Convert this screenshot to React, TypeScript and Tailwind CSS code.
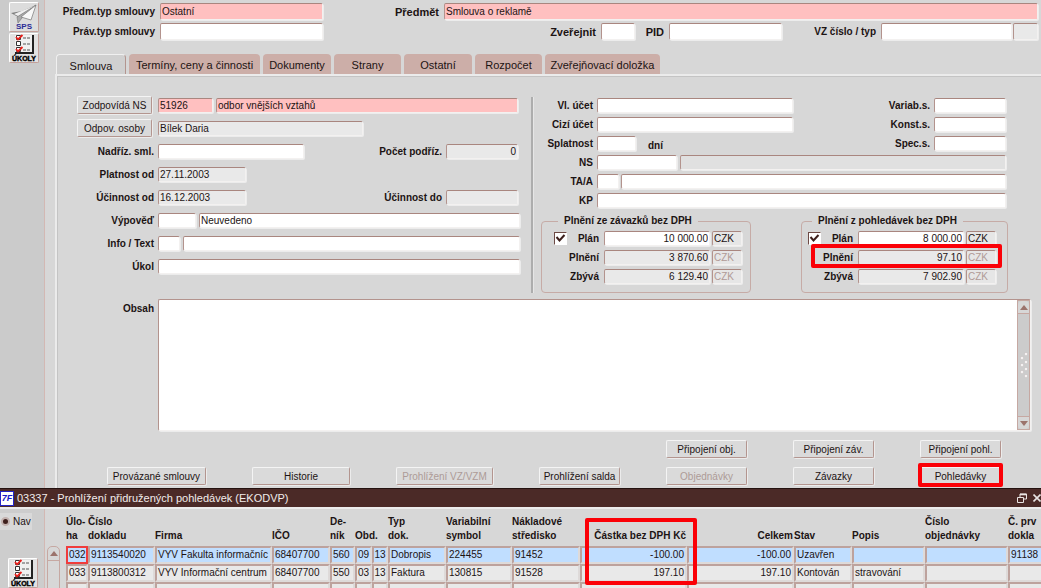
import { useState } from "react"
import type { ComponentProps, FC, ReactNode } from "react"
import clsx from "clsx"

const TABS = [
  { name: "Smlouva", width: "w-[70px]" },
  { name: "Termíny, ceny a činnosti", width: "w-[131px]" },
  { name: "Dokumenty", width: "w-[68px]" },
  { name: "Strany", width: "w-[67px]" },
  { name: "Ostatní", width: "w-[68px]" },
  { name: "Rozpočet", width: "w-[67px]" },
  { name: "Zveřejňovací doložka", width: "w-[115px]" },
]

type Column = { title: ReactNode; width: string; span?: number; right?: boolean; marked?: boolean }

const COLUMNS: Column[] = [
  { title: <>Úlo-<br />ha</>, width: "w-[22px]" },
  { title: <>Číslo<br />dokladu</>, width: "w-[67px]" },
  { title: "Firma", width: "w-[117px]" },
  { title: "IČO", width: "w-[58px]" },
  { title: <>De-<br />ník</>, width: "w-[25px]" },
  { title: "Obd.", width: "w-[33px]", span: 2 },
  { title: <>Typ<br />dok.</>, width: "w-[58px]" },
  { title: <>Variabilní<br />symbol</>, width: "w-[66px]" },
  { title: <>Nákladové<br />středisko</>, width: "w-[68px]" },
  { title: "Částka bez DPH Kč", width: "w-[107px]", right: true, marked: true },
  { title: "Celkem", width: "w-[107px]", right: true },
  { title: "Stav", width: "w-[58px]" },
  { title: "Popis", width: "w-[73px]" },
  { title: <>Číslo<br />objednávky</>, width: "w-[83px]" },
  { title: <>Č. prv<br />dokla</>, width: "w-[80px]" },
]

const ROWS = [
  ["032", "9113540020", "VYV Fakulta informačníc", "68407700", "560", "09", "13", "Dobropis", "224455", "91452", "-100.00", "-100.00", "Uzavřen", "", "", "91138"],
  ["033", "9113800312", "VYV Informační centrum", "68407700", "550", "03", "13", "Faktura", "130815", "91528", "197.10", "197.10", "Kontován", "stravování", "", ""],
  ["", "", "", "", "", "", "", "", "", "", "", "", "", "", "", ""],
]

const Field: FC<ComponentProps<"input">> = ({ className, ...props }) => (
  <input
    type="text"
    className={clsx(
      "min-w-0 rounded-[2px] border border-t-[#a9867f] border-r-[#f3f1f0] border-b-[#f3f1f0] border-l-[#b3938d] px-px shadow-[1px_1px_0_#ececec] outline-none",
      className
    )}
    {...props}
  />
)

const Label: FC<ComponentProps<"label">> = ({ className, ...props }) => (
  <label className={clsx("shrink-0 pt-px text-right font-bold whitespace-nowrap", className)} {...props} />
)

const Button: FC<ComponentProps<"button">> = ({ className, ...props }) => (
  <button
    type="button"
    className={clsx(
      "h-[18px] shrink-0 rounded-[2px] border border-t-[#f4f4f4] border-r-[#b3958f] border-b-[#b3958f] border-l-[#f4f4f4] bg-[#dadada] pt-0.5 whitespace-nowrap shadow-[1px_1px_0_#ececec] disabled:text-[#ad9a97]",
      className
    )}
    {...props}
  />
)

const TasksButton = () => (
  <button
    type="button"
    aria-label="Úkoly"
    className="flex h-[30px] w-[30px] items-center justify-center rounded-[2px] border border-t-white border-r-[#c3a09a] border-b-[#c3a09a] border-l-white bg-[#e2e2e2]"
  >
    <svg viewBox="0 0 28 28" className="size-7">
      <rect x="5" y="1" width="17" height="18" fill="#f0f0f0" />
      <path d="M22 1h2v19h-2zM5 18h19v2H5z" fill="#222" />
      <path d="M6.500 1.500h4v4h-4zM6.500 7.500h4v4h-4zM6.500 13.500h4v4h-4z" fill="#fff" stroke="#333" />
      <path d="M13 4h7M13 10h7M13 16h7" stroke="#555" strokeDasharray="3 1" />
      <path d="M6 3l2 2.500L12.500 1M6 15l2 2.500L12.500 13" fill="none" stroke="#e8201c" strokeWidth="1.800" />
      <text x="14" y="27" textAnchor="middle" fontSize="7" fontWeight="bold" stroke="#000" strokeWidth="0.400">
        ÚKOLY
      </text>
    </svg>
  </button>
)

const SpsButton = () => (
  <button
    type="button"
    aria-label="SPS"
    className="flex h-[30px] w-[30px] items-center justify-center rounded-[2px] border border-t-white border-r-[#c3a09a] border-b-[#c3a09a] border-l-white bg-[#dcdcdc]"
  >
    <svg viewBox="0 0 28 28" className="size-7">
      <path d="M26 2L12 8 1 10l7 4z" fill="#7d7d7d" />
      <path d="M26 2L7 14l1 6 4-5z" fill="#a9a9a9" stroke="#777" strokeWidth="0.600" />
      <path d="M26 2L11 14l10 3z" fill="#f8f8f8" stroke="#777" strokeWidth="0.700" />
      <path d="M24 3L4 11l4 2z" fill="#efefef" />
      <text x="14" y="26" textAnchor="middle" fontSize="8" fontWeight="bold" fill="#2b2b96">
        SPS
      </text>
    </svg>
  </button>
)

type TotalsProps = {
  id: string
  title: string
  amounts: [string, string, string]
  padding: string
  marked?: boolean
}

const Totals: FC<TotalsProps> = ({ id, title, amounts, padding, marked }) => (
  <fieldset className={clsx("rounded-[4px] border border-[#c6aba6] pt-1 pb-2", padding)}>
    <legend className="ml-1 px-1.5 font-bold">{title}</legend>
    <div className="flex flex-col gap-1">
      {["Plán", "Plnění", "Zbývá"].map((name, i) => (
        <div key={name} className="relative flex h-[15px] items-center justify-end">
          {i === 0 && (
            <span className="relative flex">
              <input
                type="checkbox"
                defaultChecked
                aria-label={title}
                className="size-[13px] appearance-none border border-t-[#6d4a45] border-r-white border-b-white border-l-[#6d4a45] bg-white"
              />
              <svg viewBox="0 0 13 13" className="pointer-events-none absolute inset-0 size-[13px]">
                <path d="M2.500 5l3 3.500 5-5.500" fill="none" stroke="#3d1f1c" strokeWidth="2" />
              </svg>
            </span>
          )}
          <Label htmlFor={id + i} className="w-8">{name}</Label>
          <Field
            id={id + i}
            readOnly={i > 0}
            defaultValue={amounts[i]}
            className={clsx("ml-[5px] h-[15px] w-[106px] text-right", i > 0 ? "bg-[#e9e9e9]" : "bg-white")}
          />
          <Field
            aria-label={name + " měna"}
            readOnly
            defaultValue="CZK"
            className={clsx("ml-0.5 h-[15px] w-[30px] bg-[#e6e6e6]", i > 0 && "text-[#b09a96]")}
          />
          {marked && i === 1 && (
            <div className="pointer-events-none absolute -top-1.5 -right-1.5 z-10 h-6 w-[191px] rounded-[2px] border-4 border-[#fb0007]" />
          )}
        </div>
      ))}
    </div>
  </fieldset>
)

const ContractHeader = () => (
  <div className="flex flex-col gap-[3px] pt-[3px] pr-[3px]">
    <div className="flex items-center gap-[5px]">
      <Label htmlFor="typ" className="w-[110px]">Předm.typ smlouvy</Label>
      <Field id="typ" defaultValue="Ostatní" className="h-[17px] w-[163px] bg-[#ffc0c0]" />
      <Label htmlFor="predmet" className="w-[111px] text-[11px]">Předmět</Label>
      <Field id="predmet" defaultValue="Smlouva o reklamě" className="h-[17px] flex-1 bg-[#ffc0c0]" />
    </div>
    <div className="flex items-center gap-[5px]">
      <Label htmlFor="pravtyp" className="w-[110px]">Práv.typ smlouvy</Label>
      <Field id="pravtyp" className="h-[17px] w-[163px] bg-white" />
      <Label htmlFor="zverejnit" className="flex-1 text-[11px]">Zveřejnit</Label>
      <Field id="zverejnit" className="h-[17px] w-[34px] bg-white" />
      <Label htmlFor="pid" className="w-6 text-[11px]">PID</Label>
      <Field id="pid" className="h-[17px] w-[113px] bg-white" />
      <Label htmlFor="vz" className="w-[89px]">VZ číslo / typ</Label>
      <div className="flex gap-px">
        <Field id="vz" className="h-[17px] w-[131px] bg-white" />
        <Field aria-label="VZ typ" readOnly className="h-[17px] w-[25px] bg-[#e9e9e9]" />
      </div>
    </div>
  </div>
)

const LeftForm = () => (
  <div className="flex w-[462px] shrink-0 flex-col gap-[5px] pl-[19px] *:flex *:h-[18px] *:items-center">
    <div>
      <Button className="mr-1.5 w-[75px]">Zodpovídá NS</Button>
      <Field aria-label="Zodpovídá NS" defaultValue="51926" className="h-[15px] w-[55px] bg-[#ffc0c0]" />
      <Field aria-label="Odbor" defaultValue="odbor vnějších vztahů" className="mr-0.5 ml-[3px] h-[15px] flex-1 bg-[#ffc0c0]" />
    </div>
    <div>
      <Button className="mr-1.5 w-[75px]">Odpov. osoby</Button>
      <Field aria-label="Odpov. osoby" readOnly defaultValue="Bílek Daria" className="h-[15px] w-[205px] bg-[#e9e9e9]" />
    </div>
    <div>
      <Label htmlFor="nadriz" className="mr-1 w-[77px]">Nadříz. sml.</Label>
      <Field id="nadriz" className="h-[15px] w-[146px] bg-white" />
      <Label htmlFor="pocet" className="mr-1 flex-1">Počet podříz.</Label>
      <Field id="pocet" readOnly defaultValue="0" className="mr-0.5 h-[15px] w-[72px] bg-[#e9e9e9] text-right" />
    </div>
    <div>
      <Label htmlFor="platnost" className="mr-1 w-[77px]">Platnost od</Label>
      <Field id="platnost" readOnly defaultValue="27.11.2003" className="h-[15px] w-[88px] bg-[#e9e9e9]" />
    </div>
    <div>
      <Label htmlFor="ucinnostod" className="mr-1 w-[77px]">Účinnost od</Label>
      <Field id="ucinnostod" readOnly defaultValue="16.12.2003" className="h-[15px] w-[88px] bg-[#e9e9e9]" />
      <Label htmlFor="ucinnostdo" className="mr-1 flex-1">Účinnost do</Label>
      <Field id="ucinnostdo" readOnly className="mr-0.5 h-[15px] w-[72px] bg-[#e9e9e9]" />
    </div>
    <div>
      <Label htmlFor="vypoved" className="mr-1 w-[77px]">Výpověď</Label>
      <Field id="vypoved" className="h-[15px] w-[38px] bg-white" />
      <Field aria-label="Výpověď text" defaultValue="Neuvedeno" className="ml-[3px] h-[15px] flex-1 bg-white" />
    </div>
    <div>
      <Label htmlFor="info" className="mr-1 w-[77px]">Info / Text</Label>
      <Field id="info" className="h-[15px] w-[22px] bg-white" />
      <Field aria-label="Text" className="ml-[3px] h-[15px] flex-1 bg-white" />
    </div>
    <div>
      <Label htmlFor="ukol" className="mr-1 w-[77px]">Úkol</Label>
      <Field id="ukol" className="h-[15px] flex-1 bg-white" />
    </div>
  </div>
)

const RightForm = () => (
  <div className="flex flex-1 flex-col pt-0.5">
    <div className="flex flex-col gap-1 pr-0.5 *:flex *:h-[15px] *:items-center">
      <div>
        <Label htmlFor="vlucet" className="mr-1 w-[52px]">Vl. účet</Label>
        <Field id="vlucet" className="h-[15px] w-[196px] bg-white" />
        <Label htmlFor="variab" className="mr-1 flex-1">Variab.s.</Label>
        <Field id="variab" className="h-[15px] w-[72px] bg-white" />
      </div>
      <div>
        <Label htmlFor="ciziucet" className="mr-1 w-[52px]">Cizí účet</Label>
        <Field id="ciziucet" className="h-[15px] w-[196px] bg-white" />
        <Label htmlFor="konst" className="mr-1 flex-1">Konst.s.</Label>
        <Field id="konst" className="h-[15px] w-[72px] bg-white" />
      </div>
      <div>
        <Label htmlFor="splatnost" className="mr-1 w-[52px]">Splatnost</Label>
        <Field id="splatnost" className="h-[15px] w-[39px] bg-white" />
        <span className="ml-3 pt-1 font-bold">dní</span>
        <Label htmlFor="spec" className="mr-1 flex-1">Spec.s.</Label>
        <Field id="spec" className="h-[15px] w-[72px] bg-white" />
      </div>
      <div>
        <Label htmlFor="ns" className="mr-1 w-[52px]">NS</Label>
        <Field id="ns" className="h-[15px] w-20 bg-white" />
        <Field aria-label="NS název" readOnly className="ml-[3px] h-[15px] flex-1 bg-[#e0e0e0]" />
      </div>
      <div>
        <Label htmlFor="ta" className="mr-1 w-[52px]">TA/A</Label>
        <Field id="ta" className="h-[15px] w-[22px] bg-white" />
        <Field aria-label="TA/A název" className="ml-0.5 h-[15px] flex-1 bg-white" />
      </div>
      <div>
        <Label htmlFor="kp" className="mr-1 w-[52px]">KP</Label>
        <Field id="kp" className="h-[15px] flex-1 bg-white" />
      </div>
    </div>
    <div className="mt-[7px] flex justify-between">
      <Totals
        id="zavazky"
        title="Plnění ze závazků bez DPH"
        amounts={["10 000.00", "3 870.60", "6 129.40"]}
        padding="pr-2 pl-3"
      />
      <Totals
        id="pohledavky"
        title="Plnění z pohledávek bez DPH"
        amounts={["8 000.00", "97.10", "7 902.90"]}
        padding="pr-[11px] pl-1.5"
        marked
      />
    </div>
  </div>
)

const ContentBox = () => (
  <div className="mt-1.5 flex pr-2.5 pl-[19px]">
    <Label htmlFor="obsah" className="mt-[3px] mr-1 w-[77px]">Obsah</Label>
    <div className="flex h-[132px] flex-1 rounded-[2px] border border-t-[#b3938d] border-r-[#f3f1f0] border-b-[#f3f1f0] border-l-[#b3938d] bg-white shadow-[1px_1px_0_#ececec]">
      <textarea id="obsah" className="flex-1 resize-none px-px outline-none" />
      <div className="flex w-[13px] flex-col border border-[#c6a8a2] bg-[#cccccc]">
        <button type="button" aria-label="Nahoru" className="flex h-[13px] items-center justify-center rounded-t-[4px] border-b border-[#c6a8a2] bg-[#d7d7d7]">
          <svg viewBox="0 0 8 5" className="h-[5px] w-2"><path d="M4 0l4 5H0z" fill="#9b736c" /></svg>
        </button>
        <div className="flex flex-1 items-center justify-center">
          <svg viewBox="0 0 8 26" className="h-[26px] w-2">
            {[[6, 2], [2, 6], [6, 10], [2, 13], [6, 17], [2, 20], [6, 24]].map(([x, y]) => (
              <circle key={y} cx={x} cy={y} r="1.500" fill="#fafafa" stroke="#b9a8a5" strokeWidth="0.300" />
            ))}
          </svg>
        </div>
        <button type="button" aria-label="Dolů" className="flex h-[13px] items-center justify-center rounded-b-[4px] border-t border-[#c6a8a2] bg-[#d7d7d7]">
          <svg viewBox="0 0 8 5" className="h-[5px] w-2"><path d="M4 5l4-5H0z" fill="#9b736c" /></svg>
        </button>
      </div>
    </div>
  </div>
)

const Actions = () => (
  <div className="mt-[9px] flex flex-col gap-[9px] pr-10 pb-[3px]">
    <div className="flex justify-end gap-[46px]">
      <Button className="w-[81px]">Připojení obj.</Button>
      <Button className="w-[81px]">Připojení záv.</Button>
      <Button className="w-[81px]">Připojení pohl.</Button>
    </div>
    <div className="flex justify-end gap-[46px]">
      <Button className="w-[99px]">Provázané smlouvy</Button>
      <Button className="w-[98px]">Historie</Button>
      <Button disabled className="w-[97px]">Prohlížení VZ/VZM</Button>
      <Button className="w-[81px]">Prohlížení salda</Button>
      <Button disabled className="w-[81px]">Objednávky</Button>
      <Button className="w-[81px]">Závazky</Button>
      <div className="relative flex">
        <Button className="w-[81px]">Pohledávky</Button>
        <div className="pointer-events-none absolute -inset-x-0.5 -top-1 h-6 rounded-[2px] border-4 border-[#fb0007]" />
      </div>
    </div>
  </div>
)

const TitleBar = () => (
  <header className="flex h-[19px] items-center border-t border-[#241210] bg-[#4b2a27] text-[11px] text-[#f1eceb]">
    <span className="mr-[3px] flex h-[15px] w-3.5 items-center justify-center border border-[#2424c8] bg-white text-[9px] font-bold text-[#1818c8] italic">
      7F
    </span>
    <h1 className="flex-1">03337 - Prohlížení přidružených pohledávek (EKODVP)</h1>
    <button type="button" aria-label="Obnovit" className="mr-1.5">
      <svg viewBox="0 0 10 10" className="size-2.5" fill="none" stroke="#e9e4e3">
        <path d="M3 4V1h6.500v5H7" />
        <path d="M3 1.500h6.500" strokeWidth="1.600" />
        <path d="M.5 4.500h6v5h-6z" />
      </svg>
    </button>
    <button type="button" aria-label="Zavřít">
      <svg viewBox="0 0 8 8" className="size-2" stroke="#e9e4e3" strokeWidth="1.600">
        <path d="M.5.5l7 7M7.500.5l-7 7" />
      </svg>
    </button>
  </header>
)

const ClaimsTable = () => (
  <table className="w-[1022px] shrink-0 table-fixed border-separate border-spacing-0">
    <thead>
      <tr>
        {COLUMNS.map((column, i) => (
          <th
            key={i}
            colSpan={column.span}
            className={clsx(
              "relative pb-[3px] align-bottom leading-[14px] whitespace-nowrap",
              column.width,
              column.right ? "pr-px text-right" : "text-left"
            )}
          >
            {column.title}
            {column.marked && (
              <div className="pointer-events-none absolute top-[3px] left-[5px] z-10 h-[67px] w-28 rounded-[2px] border-4 border-[#fb0007]" />
            )}
          </th>
        ))}
      </tr>
    </thead>
    <tbody>
      {ROWS.map((row, r) => (
        <tr key={r} className={r === 0 ? "bg-[#c0deff]" : "bg-[#e9e9e9]"}>
          {row.map((cell, c) => (
            <td
              key={c}
              className={clsx(
                "h-[18px] border-2 leading-[14px] whitespace-nowrap",
                r === 0 && c === 0
                  ? "border-[#f03c3c]"
                  : "border-t-[#bda29d] border-r-[#dedad9] border-b-[#dedad9] border-l-[#bda29d]",
                c === 10 || c === 11 ? "pr-px text-right" : "pl-px"
              )}
            >
              {cell}
            </td>
          ))}
        </tr>
      ))}
    </tbody>
  </table>
)

const App: FC = () => {
  const [activeTab, setActiveTab] = useState("Smlouva")

  return (
    <div className="flex h-screen flex-col overflow-hidden bg-[#d7d7d7] font-['Liberation_Sans',Arial,sans-serif] text-[10px] leading-3 text-[#1c1313]">
      <div className="flex shrink-0">
        <aside className="flex w-[45px] shrink-0 flex-col gap-px border-r border-[#d3b8b3] bg-[#cbcbcb] pt-0.5 pl-[9px]">
          <SpsButton />
          <TasksButton />
        </aside>

        <main className="flex-1">
          <ContractHeader />

          <div role="tablist" className="mt-3.5 flex items-end gap-[3px] pl-[11px] text-[11px]">
            {TABS.map((tab) => (
              <button
                key={tab.name}
                type="button"
                role="tab"
                aria-selected={tab.name === activeTab}
                onClick={() => setActiveTab(tab.name)}
                className={clsx(
                  "h-5 rounded-t-[4px] pt-0.5 whitespace-nowrap",
                  tab.width,
                  tab.name === activeTab
                    ? "border-t border-r border-l border-t-[#f0f0f0] border-r-[#b3958f] border-l-[#f0f0f0] bg-[#d0d0d0]"
                    : "bg-[#ccaea8]"
                )}
              >
                {tab.name}
              </button>
            ))}
          </div>

          <div className="ml-[10px] border-t-2 border-l-2 border-[#ebebeb]">
            <div className="border-t border-l border-[#c4c4c4] pt-[19px]">
              <div className="flex pr-[33px]">
                <LeftForm />
                <div className="mt-px mr-[7px] ml-[11px] w-[3px] border-r border-l-2 border-r-[#e6e6e6] border-l-[#adadad]" />
                <RightForm />
              </div>
              <ContentBox />
              <Actions />
            </div>
          </div>
        </main>
      </div>

      <section className="flex flex-1 flex-col">
        <TitleBar />
        <div className="flex flex-1 border-t-2 border-[#ececec]">
          <aside className="flex w-[45px] shrink-0 flex-col border-r border-[#d3b8b3] bg-[#cdcdcd]">
            <label className="mt-1 flex h-[17px] w-8 items-center gap-[3px] bg-[#d9d9d9] pl-px">
              <input
                type="radio"
                name="nav"
                defaultChecked
                className="size-[9px] appearance-none rounded-full border-2 border-[#c3b2af] bg-[#3f211e]"
              />
              Nav
            </label>
            <div className="mt-7 pl-2">
              <TasksButton />
            </div>
          </aside>
          <div className="flex min-w-0 flex-1 overflow-hidden pt-1.5">
            <div className="mt-[31px] mr-[6px] ml-0.5 flex w-[13px] shrink-0 flex-col rounded-t-[5px] border border-[#c6a8a2]">
              <button type="button" aria-label="Předchozí" className="flex h-3.5 items-center justify-center border-b border-[#c6a8a2]">
                <svg viewBox="0 0 8 5" className="h-[5px] w-2"><path d="M4 0l4 5H0z" fill="#9b736c" /></svg>
              </button>
            </div>
            <ClaimsTable />
          </div>
        </div>
      </section>
    </div>
  )
}

export default App
